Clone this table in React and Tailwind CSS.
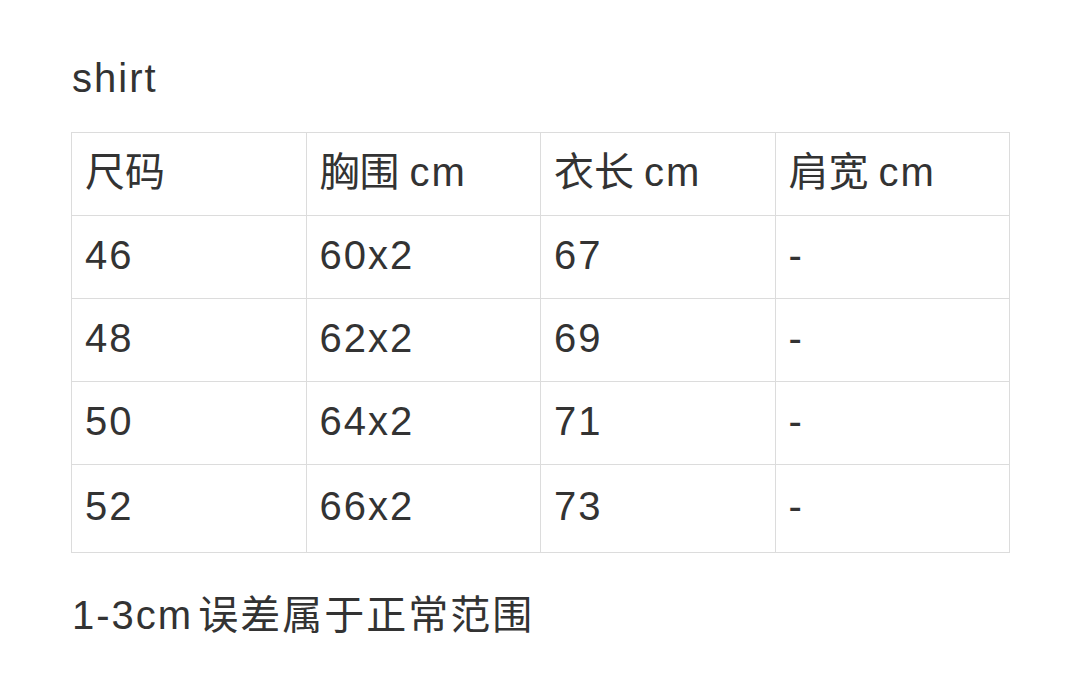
export default function App() {
  const rows = [
    ['46', '60x2', '67', '-'],
    ['48', '62x2', '69', '-'],
    ['50', '64x2', '71', '-'],
    ['52', '66x2', '73', '-'],
  ];
  const head = [
    ['尺码', ''],
    ['胸围', 'cm'],
    ['衣长', 'cm'],
    ['肩宽', 'cm'],
  ];

  return (
    <div
      className="w-[1080px] h-[695px] bg-white text-[#333333] pl-[71px] pt-[50px] tracking-[2px]"
      style={{ fontFamily: '"Liberation Sans", "Noto Sans CJK SC", sans-serif' }}
    >
      <div className="text-[40px] leading-[56px] pl-[1px]">shirt</div>
      <table className="mt-[26px] w-[939px] border-collapse table-fixed text-[40px]">
        <tbody>
          <tr className="h-[83px]">
            {head.map(([zh, unit]) => (
              <td key={zh} className="border border-[#dcdcdc] px-[13px] pb-[4px] align-middle">
                <span className="tracking-normal">{zh}</span>
                {unit && <span className="ml-[10px]">{unit}</span>}
              </td>
            ))}
          </tr>
          {rows.map((r, i) => (
            <tr key={r[0]} className={i === rows.length - 1 ? 'h-[88px]' : 'h-[83px]'}>
              {r.map((c, j) => (
                <td
                  key={j}
                  className={`border border-[#dcdcdc] px-[13px] ${i === rows.length - 1 ? 'align-top pt-[11px]' : 'align-middle pb-[5px]'}`}
                >
                  {c}
                </td>
              ))}
            </tr>
          ))}
        </tbody>
      </table>
      <div className="mt-[38px] text-[40px] leading-[48px] pl-[1px]">
        1-3cm<span className="ml-[5px]">误差属于正常范围</span>
      </div>
    </div>
  );
}
